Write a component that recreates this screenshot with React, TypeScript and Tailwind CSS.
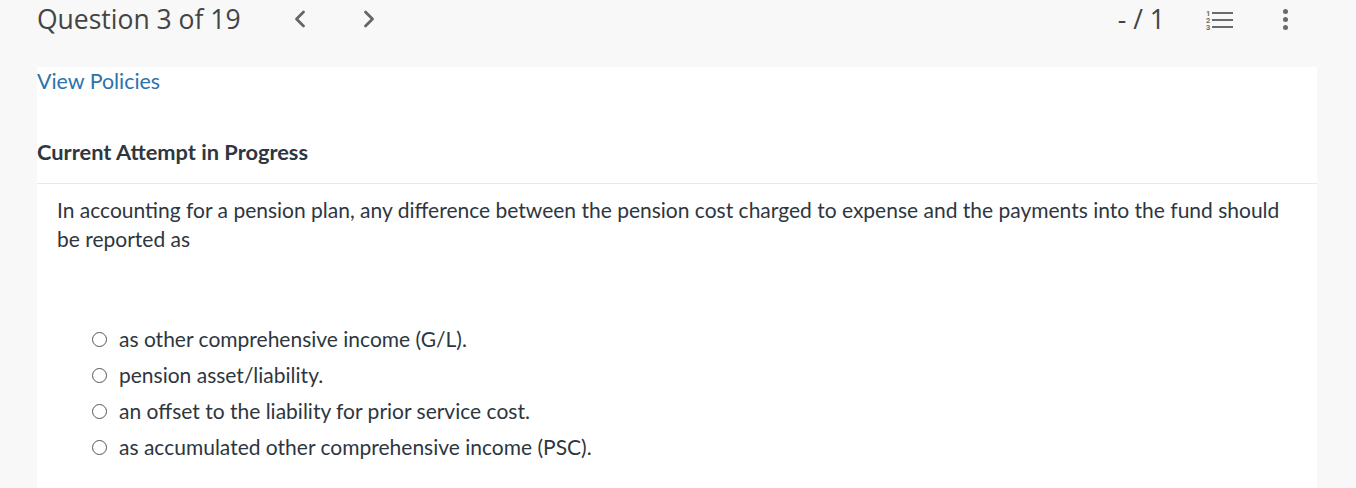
import { ChevronLeft, ChevronRight } from 'lucide-react';

const options = [
  'as other comprehensive income (G/L).',
  'pension asset/liability.',
  'an offset to the liability for prior service cost.',
  'as accumulated other comprehensive income (PSC).',
];

const ListIcon = () => (
  <svg width="27" height="22" viewBox="0 0 27 22" className="text-[#6b6b6b]">
    <text x="0" y="7" fontSize="7.5" fontWeight="700" fill="currentColor" fontFamily="Roboto, sans-serif">1</text>
    <text x="0" y="14" fontSize="7.5" fontWeight="700" fill="currentColor" fontFamily="Roboto, sans-serif">2</text>
    <text x="0" y="21" fontSize="7.5" fontWeight="700" fill="currentColor" fontFamily="Roboto, sans-serif">3</text>
    <rect x="6" y="3" width="21" height="2" fill="currentColor" />
    <rect x="6" y="10" width="21" height="2" fill="currentColor" />
    <rect x="6" y="17" width="21" height="2" fill="currentColor" />
  </svg>
);

const App = () => {
  return (
    <div className="min-h-[488px] bg-[#f8f8f8] font-['Lato','Liberation_Sans',sans-serif]">
      {/* Header */}
      <div className="flex h-[67px] items-start pl-[37px]">
        <h1 className="font-['Open_Sans',sans-serif] text-[26.5px] leading-[38px] text-[#444]">Question 3 of 19</h1>
        <button className="ml-[45px] mt-[5px] text-[#666]">
          <ChevronLeft size={28} strokeWidth={2.4} />
        </button>
        <button className="ml-[41px] mt-[5px] text-[#666]">
          <ChevronRight size={28} strokeWidth={2.4} />
        </button>
        <div className="ml-auto flex items-start pr-[68px]">
          <span className="font-['Open_Sans',sans-serif] text-[26.5px] leading-[38px] text-[#444]">- / 1</span>
          <span className="ml-[41px] mt-[9px]">
            <ListIcon />
          </span>
          <span className="ml-[50px] mt-[9px] flex flex-col gap-[3px]">
            <span className="h-[5px] w-[5px] rounded-full bg-[#6b6b6b]" />
            <span className="h-[5px] w-[5px] rounded-full bg-[#6b6b6b]" />
            <span className="h-[5px] w-[5px] rounded-full bg-[#6b6b6b]" />
          </span>
        </div>
      </div>

      {/* Body */}
      <div className="ml-[37px] mr-[39px] bg-white pb-[28px]">
        <div>
          <a className="text-[21.4px] leading-[28px] text-[#2b73ab]">View Policies</a>
        </div>
        <h2 className="mt-[43px] text-[21.8px] font-bold leading-[28px] text-[#2e3640]">Current Attempt in Progress</h2>
        <div className="mt-[17px] border-t border-[#e8e8e8]" />
        <p className="mt-[11px] pl-[20px] pr-[30px] text-[21px] leading-[29px] text-[#2e3640]">
          In accounting for a pension plan, any difference between the pension cost charged to expense and the payments into the fund should be reported as
        </p>
        <ul className="mt-[72px] flex flex-col gap-[8px] pl-[55px]">
          {options.map((o) => (
            <li key={o} className="flex h-[28px] items-center text-[21px] text-[#2e3640]">
              <span className="mr-[12px] h-[15px] w-[15px] rounded-full border border-[#555]" />
              {o}
            </li>
          ))}
        </ul>
      </div>
    </div>
  );
};

export default App;
